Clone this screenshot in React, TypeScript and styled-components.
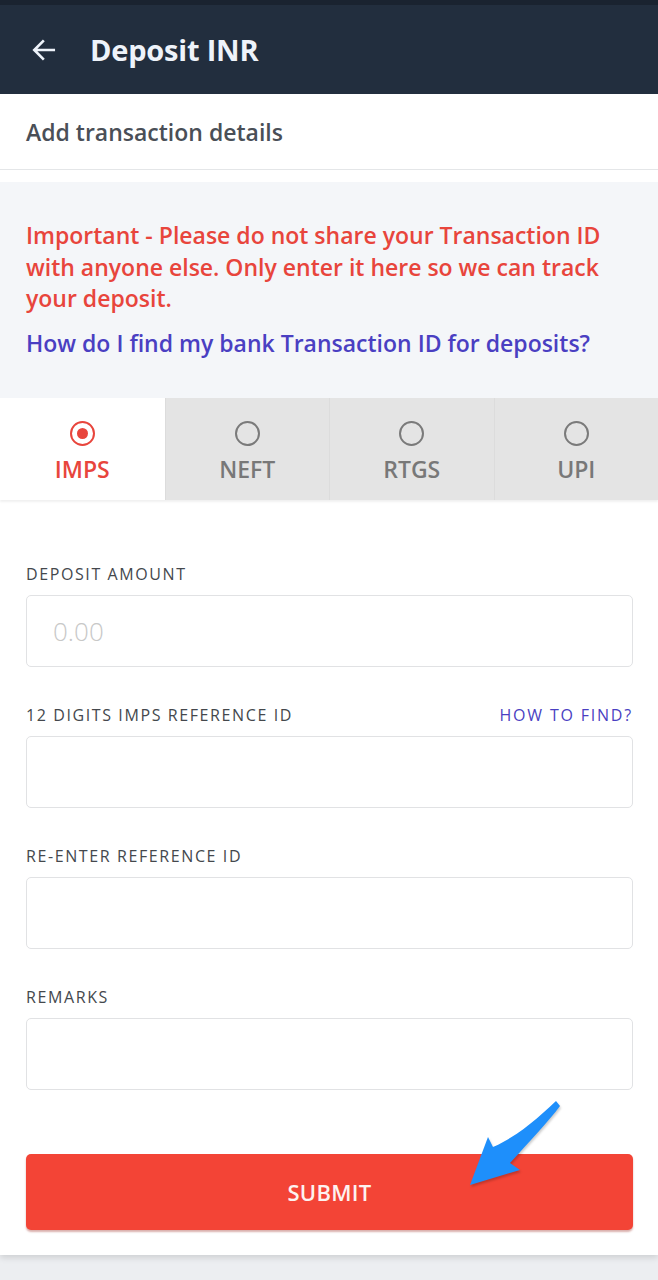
import React from "react";
import styled, {createGlobalStyle} from "styled-components";


const Red = "#e8453c";
const Link = "#4a3fc2";

const GlobalStyle = createGlobalStyle`
	body {
		margin: 0;
		background: #eceef1;
		font-family: "Open Sans", "Noto Sans", sans-serif;
	}
	* {
		box-sizing: border-box;
	}
`;

const Page = styled.div`
	position: relative;
	width: 658px;
	min-height: 1280px;
`;
const Card = styled.div`
	background: #fff;
	padding-bottom: 25px;
	box-shadow: 0 3px 6px rgba(0, 0, 0, 0.12);
`;
const Header = styled.header`
	height: 94px;
	display: flex;
	align-items: center;
	gap: 33px;
	padding: 0 0 0 31px;
	background: #222e3e;
	border-top: 5px solid #1a2330;
	color: #eef3fa;
`;
const Title = styled.h1`
	margin: 0;
	font-size: 29px;
	font-weight: 700;
	letter-spacing: -0.2px;
`;
const SubHeader = styled.div`
	height: 76px;
	display: flex;
	align-items: center;
	padding: 0 26px;
	font-size: 23px;
	font-weight: 600;
	color: #4a4f57;
	border-bottom: 1px solid #e4e6e8;
	margin-bottom: 12px;
`;
const Notice = styled.div`
	background: #f4f6f9;
	padding: 38px 26px 39px;
	font-size: 23px;
	font-weight: 600;
	line-height: 31.5px;
`;
const Warning = styled.p`
	margin: 0 0 13px;
	color: ${Red};
`;
const NoticeLink = styled.a`
	color: ${Link};
	text-decoration: none;
`;
const Tabs = styled.div`
	display: grid;
	grid-template-columns: repeat(4, 1fr);
	height: 102px;
	background: #e4e4e4;
	box-shadow: 0 2px 2px rgba(0, 0, 0, 0.06);
`;
const Tab = styled.div<{active: boolean}>`
	display: flex;
	flex-direction: column;
	align-items: center;
	padding-top: 23px;
	gap: 7px;
	font-size: 23px;
	font-weight: 600;
	color: ${p => p.active ? Red : "#787878"};
	background: ${p => p.active ? "#fff" : "transparent"};
	& + & {
		border-left: 1px solid #dcdcdc;
	}
`;
const Radio = styled.span<{active: boolean}>`
	width: 25px;
	height: 25px;
	border-radius: 50%;
	border: 2px solid ${p => p.active ? Red : "#7a7a7a"};
	display: flex;
	align-items: center;
	justify-content: center;
	&::after {
		content: "";
		width: 11px;
		height: 11px;
		border-radius: 50%;
		background: ${p => p.active ? Red : "transparent"};
	}
`;
const Form = styled.form`
	padding: 63px 25px 0 26px;
	display: flex;
	flex-direction: column;
	gap: 37px;
`;
const Field = styled.div`
	display: flex;
	flex-direction: column;
	gap: 10px;
`;
const LabelRow = styled.div`
	display: flex;
	justify-content: space-between;
	align-items: center;
	height: 22px;
`;
const Label = styled.label`
	font-size: 16px;
	font-weight: 500;
	letter-spacing: 1.6px;
	color: #44484d;
`;
const HowTo = styled.a`
	font-size: 16px;
	font-weight: 500;
	letter-spacing: 1.8px;
	color: ${Link};
	text-decoration: none;
`;
const Input = styled.input`
	height: 72px;
	width: 100%;
	border: 1.5px solid #e1e2e4;
	border-radius: 5px;
	padding: 0 26px;
	font-family: inherit;
	font-size: 26px;
	font-weight: 300;
	color: #333;
	background: #fff;
	&::placeholder {
		color: #c8c8c8;
	}
`;
const Submit = styled.button`
	margin: 27px 0 0;
	height: 76px;
	width: 100%;
	border: none;
	border-radius: 5px;
	background: #f34436;
	box-shadow: 0 2px 2px rgba(150, 30, 20, 0.35);
	color: #fdf2f0;
	font-family: inherit;
	font-size: 22px;
	font-weight: 600;
	letter-spacing: 0.3px;
`;
const Pointer = styled.svg`
	position: absolute;
	left: 460px;
	top: 1096px;
	width: 110px;
	height: 100px;
	filter: drop-shadow(1px 2px 1px rgba(0, 0, 0, 0.2));
`;


const fields = [
	{label: "DEPOSIT AMOUNT", placeholder: "0.00"},
	{label: "12 DIGITS IMPS REFERENCE ID", howTo: true},
	{label: "RE-ENTER REFERENCE ID"},
	{label: "REMARKS"}
];
const methods = ["IMPS", "NEFT", "RTGS", "UPI"];


export default function App()
{
	return (
		<Page>
			<GlobalStyle />
			<Card>
				<Header>
					<svg width="26" height="26" viewBox="0 0 24 24" fill="none"
						stroke="#eef3fa" strokeWidth="2.4" strokeLinecap="square">
						<path d="M21 12H4M11 4l-8 8 8 8" />
					</svg>
					<Title>Deposit INR</Title>
				</Header>
				<SubHeader>Add transaction details</SubHeader>
				<Notice>
					<Warning>
						Important - Please do not share your Transaction ID with anyone
						else. Only enter it here so we can track your deposit.
					</Warning>
					<NoticeLink href="#">How do I find my bank Transaction ID for deposits?</NoticeLink>
				</Notice>
				<Tabs>
					{methods.map((m, i) => (
						<Tab key={m} active={i === 0}>
							<Radio active={i === 0} />
							{m}
						</Tab>
					))}
				</Tabs>
				<Form onSubmit={e => e.preventDefault()}>
					{fields.map(f => (
						<Field key={f.label}>
							<LabelRow>
								<Label>{f.label}</Label>
								{f.howTo && <HowTo href="#">HOW TO FIND?</HowTo>}
							</LabelRow>
							<Input placeholder={f.placeholder} />
						</Field>
					))}
					<Submit type="submit">SUBMIT</Submit>
				</Form>
			</Card>
			<Pointer viewBox="460 1096 110 100">
				<path
					fill="#1e8ffb"
					d="M556 1101 C536 1120 516 1137 493 1147 L488 1137 L470 1185 L520 1170 L510 1163 C530 1141 548 1122 560 1106 Z"
				/>
			</Pointer>
		</Page>
	);
}
